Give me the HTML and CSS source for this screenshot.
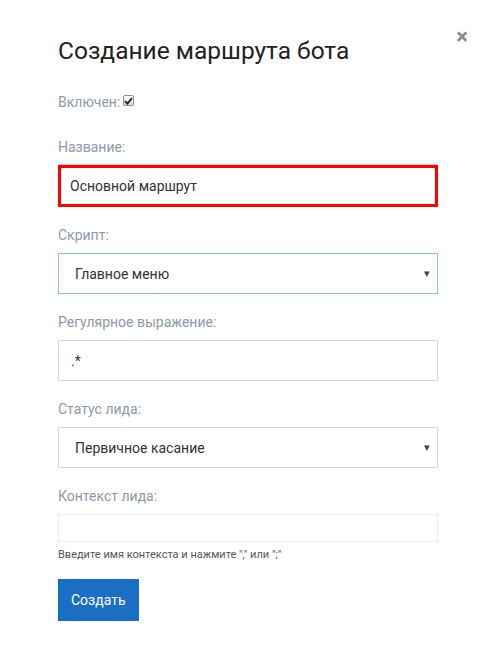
FILE: index.html
```html
<!DOCTYPE html>
<html lang="ru">
<head>
  <meta charset="UTF-8" />
  <title>Создание маршрута бота</title>
  <link rel="stylesheet" href="styles.css">
</head>
<body>
  <div class="modal">
    <div class="modal-header">
      <h2>Создание маршрута бота</h2>
      <span class="close">&times;</span>
    </div>

    <form class="route-form">
      <div class="enabled-row">
        Включен:
        <span class="checkbox">
          <svg width="9" height="8" viewBox="0 0 9 8"><path d="M1 4.2 L3.4 6.6 L8 1.2" fill="none" stroke="#222" stroke-width="1.8"/></svg>
        </span>
      </div>

      <div class="field">
        <label>Название:</label>
        <input type="text" class="form-control invalid" value="Основной маршрут">
      </div>

      <div class="field">
        <label>Скрипт:</label>
        <div class="select focused">
          <span>Главное меню</span>
          <span class="arrow">&#9662;</span>
        </div>
      </div>

      <div class="field">
        <label>Регулярное выражение:</label>
        <input type="text" class="form-control regex" value=".*">
      </div>

      <div class="field">
        <label>Статус лида:</label>
        <div class="select">
          <span>Первичное касание</span>
          <span class="arrow">&#9662;</span>
        </div>
      </div>

      <div class="field context">
        <label>Контекст лида:</label>
        <input type="text" class="form-control tags">
        <p class="hint">Введите имя контекста и нажмите "," или ";"</p>
      </div>

      <button type="submit" class="btn-primary">Создать</button>
    </form>
  </div>
</body>
</html>
```

FILE: styles.css
```css
body {
  margin: 0;
  font-family: Roboto, "Liberation Sans", Arial, sans-serif;
  background-color: #ffffff;
  color: #333;
}

.modal {
  width: 495px;
}

.modal-header {
  display: flex;
  justify-content: space-between;
  align-items: flex-start;
  padding: 36px 27px 0 58px;
}

.modal-header h2 {
  margin: 0;
  font-size: 24.5px;
  line-height: 30px;
  font-weight: 400;
  color: #222;
}

.close {
  font-size: 22px;
  line-height: 22px;
  font-weight: 700;
  color: #8a8a8a;
  margin-top: -10px;
}

.route-form {
  width: 380px;
  margin-left: 58px;
}

.enabled-row {
  margin-top: 26px;
  font-size: 14px;
  line-height: 20px;
  color: #8e99a8;
  display: flex;
  align-items: center;
  gap: 3px;
}

.checkbox {
  width: 9px;
  height: 9px;
  border: 1px solid #8f8f8f;
  border-radius: 2px;
  background: linear-gradient(#fafafa, #dcdcdc);
  display: flex;
  align-items: center;
  justify-content: center;
  margin-top: -3px;
}

.field {
  margin-top: 25px;
}

.field + .field {
  margin-top: 18px;
}

.field label {
  display: block;
  font-size: 14px;
  line-height: 20px;
  color: #8e99a8;
  margin-bottom: 8px;
}

.form-control {
  display: block;
  width: 100%;
  height: 41px;
  box-sizing: border-box;
  border: 1px solid #d3d7dc;
  padding: 0 13px;
  font-family: inherit;
  font-size: 14px;
  color: #333;
  outline: none;
}

.form-control.invalid {
  height: 42px;
  border: 3px solid #ff0000;
  box-shadow: 0 -1px 0 #ccc;
  padding-left: 9px;
}

.form-control.regex {
  padding-left: 12px;
}

.select {
  display: flex;
  justify-content: space-between;
  align-items: center;
  height: 41px;
  box-sizing: border-box;
  border: 1px solid #d3d7dc;
  padding: 0 7px 0 16px;
  font-size: 14px;
  color: #333;
}

.select.focused {
  border-color: #8dbcef;
}

.arrow {
  font-size: 11px;
  color: #444;
}

.form-control.tags {
  height: 28px;
  border-color: #ececec;
}

.hint {
  margin: 6px 0 0;
  font-size: 11px;
  line-height: 14px;
  color: #555;
}

.btn-primary {
  margin-top: 17px;
  height: 42px;
  padding: 0 13px;
  background-color: #1a6ec4;
  color: white;
  border: none;
  font-family: inherit;
  font-size: 14px;
  cursor: pointer;
}

.btn-primary:hover {
  background-color: #155ba3;
}
```
